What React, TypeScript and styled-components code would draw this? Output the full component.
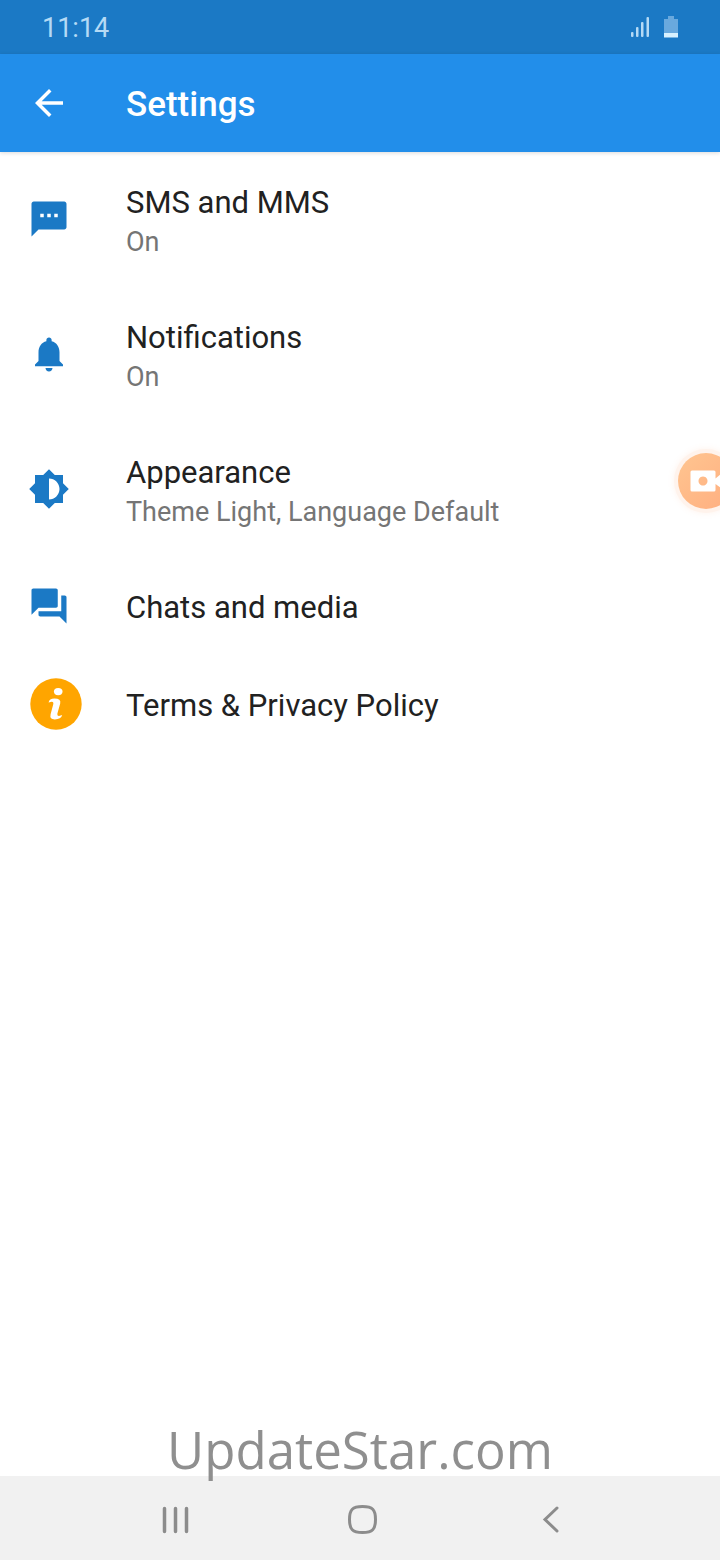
import React from "react";
import styled, { createGlobalStyle } from "styled-components";

const GlobalStyle = createGlobalStyle`
  * { box-sizing: border-box; }
  body { margin: 0; background: #fff; font-family: Roboto, "Noto Sans", sans-serif; }
  button { font: inherit; border: 0; padding: 0; background: none; cursor: pointer; }
  svg { display: block; flex: none; }
`;

const Screen = styled.div`
  position: relative;
  display: flex;
  flex-direction: column;
  min-height: 100vh;
  overflow: hidden;
`;

const StatusBar = styled.div`
  display: flex;
  align-items: center;
  justify-content: space-between;
  height: 54px;
  padding: 0 41px 0 42px;
  background: #1b79c5;
  color: #b5daf5;
`;

const Clock = styled.span`
  padding-top: 2px;
  font-size: 27px;
  line-height: 32px;
`;

const StatusIcons = styled.div`
  display: flex;
  align-items: center;
  gap: 13px;
`;

const AppBar = styled.header`
  display: flex;
  align-items: center;
  gap: 56px;
  height: 98px;
  padding: 0 28px;
  background: #228eea;
  color: #fff;
  box-shadow: 0 1px 4px rgba(0, 0, 0, 0.15);
`;

const BackButton = styled.button`
  color: inherit;
`;

const PageTitle = styled.h1`
  margin: 0;
  padding-top: 3px;
  font-size: 35px;
  line-height: 42px;
  font-weight: 500;
`;

const SettingsList = styled.main`
  flex: 1;
  display: flex;
  flex-direction: column;
`;

const SettingRow = styled.button<{ $tall?: boolean }>`
  display: flex;
  align-items: ${(p) => (p.$tall ? "flex-start" : "center")};
  width: 100%;
  min-height: ${(p) => (p.$tall ? 135 : 98)}px;
  padding: ${(p) => (p.$tall ? "31px 28px 0" : "0 28px")};
  text-align: left;
`;

const IconSlot = styled.span<{ $tall?: boolean }>`
  flex: none;
  width: 98px;
  padding-top: ${(p) => (p.$tall ? 15 : 0)}px;
`;

const RowText = styled.span<{ $tall?: boolean }>`
  display: flex;
  flex-direction: column;
  padding-top: ${(p) => (p.$tall ? 0 : 4)}px;
`;

const RowTitle = styled.span`
  color: #212121;
  font-size: 31px;
  line-height: 40px;
`;

const RowSummary = styled.span`
  color: #757575;
  font-size: 27px;
  line-height: 38px;
`;

const RecordButton = styled.button`
  position: absolute;
  top: 453px;
  right: -14px;
  display: flex;
  align-items: center;
  justify-content: center;
  width: 56px;
  height: 56px;
  border-radius: 50%;
  background: linear-gradient(135deg, #ffc590, #ffae80);
  box-shadow: 0 0 0 4px #fff3ec, 0 0 6px 4px rgba(255, 170, 120, 0.15);
`;

const Watermark = styled.div`
  position: absolute;
  right: 0;
  bottom: 74px;
  left: 0;
  color: #8f8f8f;
  font-family: "Open Sans", "Noto Sans", sans-serif;
  font-size: 51px;
  line-height: 74px;
  text-align: center;
`;

const NavBar = styled.nav`
  display: flex;
  align-items: center;
  justify-content: space-between;
  height: 84px;
  padding: 3px 150px 0 156px;
  background: #f1f1f1;
  color: #8c8c8c;
`;

const NavButton = styled.button`
  color: inherit;
`;

const GlyphIcon = ({ d, color = "#1b79c5" }: { d: string; color?: string }) => (
  <svg width="42" height="42" viewBox="0 0 24 24" fill={color} aria-hidden="true">
    <path d={d} />
  </svg>
);

const InfoIcon = () => (
  <svg width="56" height="56" viewBox="0 0 56 56" aria-hidden="true">
    <circle cx="28" cy="28" r="25.7" fill="#ffa500" />
    <ellipse cx="30.2" cy="15.600" rx="4.300" ry="3.700" fill="#fff" />
    <path
      d="M20.600 26.400Q21.200 22.600 26.400 22.600Q33.400 22.600 32.200 27.600L29.400 37.600Q28.800 40.200 31 40L34.200 39Q33 43.400 26.800 43.400Q21.400 43.400 22.600 38.200L25.200 28.400Q25.900 25.600 23.600 25.800Z"
      fill="#fff"
    />
  </svg>
);

const rows = [
  {
    title: "SMS and MMS",
    summary: "On",
    icon: <GlyphIcon d="M20.700 2H3.300C2.600 2 2 2.600 2 3.300V22l4-4h14.700c.7 0 1.300-.6 1.300-1.300V3.300c0-.7-.6-1.300-1.300-1.300zM9 11H7V9h2v2zm4 0h-2V9h2v2zm4 0h-2V9h2v2z" />,
  },
  {
    title: "Notifications",
    summary: "On",
    icon: <GlyphIcon d="M12 22c1.100 0 2-.9 2-2h-4c0 1.100.89 2 2 2zm6-6v-5c0-3.070-1.640-5.640-4.500-6.320V4c0-.83-.67-1.500-1.500-1.500s-1.500.67-1.500 1.500v.68C7.630 5.360 6 7.920 6 11v5l-2 2v1h16v-1l-2-2z" />,
  },
  {
    title: "Appearance",
    summary: "Theme Light, Language Default",
    icon: <GlyphIcon d="M20 15.310L23.310 12 20 8.690V4h-4.690L12 .69 8.690 4H4v4.690L.69 12 4 15.310V20h4.690L12 23.310 15.310 20H20v-4.690zM12 18V6c3.310 0 6 2.690 6 6s-2.690 6-6 6z" />,
  },
  {
    title: "Chats and media",
    icon: <GlyphIcon d="M21 6h-2v9H6v2c0 .55.45 1 1 1h11l4 4V7c0-.55-.45-1-1-1zm-4 6V3c0-.55-.45-1-1-1H3c-.55 0-1 .45-1 1v14l4-4h10c.55 0 1-.45 1-1z" />,
  },
  { title: "Terms & Privacy Policy", icon: <InfoIcon /> },
];

export default function App() {
  return (
    <Screen>
      <GlobalStyle />
      <StatusBar>
        <Clock>11:14</Clock>
        <StatusIcons>
          <svg width="20" height="24" viewBox="0 0 20 24" fill="#b5daf5" aria-hidden="true">
            <rect x="1" y="17" width="2.500" height="5" rx="1" />
            <rect x="6" y="12" width="2.500" height="10" rx="1" />
            <rect x="11" y="7" width="2.500" height="15" rx="1" />
            <rect x="16.500" y="2" width="2.500" height="20" rx="1" />
          </svg>
          <svg width="16" height="24" viewBox="0 0 16 24" aria-hidden="true">
            <path d="M5 1h6v3h4v14H1V4h4z" fill="#69a9de" />
            <path d="M1 18h14v4.500H1z" fill="#d8f1ff" />
          </svg>
        </StatusIcons>
      </StatusBar>
      <AppBar>
        <BackButton aria-label="Back">
          <GlyphIcon color="#fff" d="M20 11H7.830l5.590-5.590L12 4l-8 8 8 8 1.410-1.410L7.830 13H20v-2z" />
        </BackButton>
        <PageTitle>Settings</PageTitle>
      </AppBar>
      <SettingsList>
        {rows.map(({ title, summary, icon }) => (
          <SettingRow key={title} $tall={!!summary}>
            <IconSlot $tall={!!summary}>{icon}</IconSlot>
            <RowText $tall={!!summary}>
              <RowTitle>{title}</RowTitle>
              {summary && <RowSummary>{summary}</RowSummary>}
            </RowText>
          </SettingRow>
        ))}
      </SettingsList>
      <NavBar>
        <NavButton aria-label="Recent apps">
          <svg width="40" height="40" viewBox="0 0 40 40" stroke="currentColor" strokeWidth="3.500" strokeLinecap="round">
            <path d="M8.500 8.500v23M19.500 8.500v23M30.500 8.500v23" />
          </svg>
        </NavButton>
        <NavButton aria-label="Home">
          <svg width="40" height="40" viewBox="0 0 40 40" fill="none" stroke="currentColor" strokeWidth="3">
            <path d="M19.500 6.500C29.500 6.500 32.500 9.500 32.500 19.500S29.500 32.500 19.500 32.500 6.500 29.500 6.500 19.500 9.500 6.500 19.500 6.500z" />
          </svg>
        </NavButton>
        <NavButton aria-label="Back">
          <svg width="40" height="40" viewBox="0 0 40 40" fill="none" stroke="currentColor" strokeWidth="3" strokeLinecap="round">
            <path d="M27 8L15 19.500 27 31" />
          </svg>
        </NavButton>
      </NavBar>
      <RecordButton aria-label="Record screen">
        <svg width="32" height="24" viewBox="0 0 32 24" aria-hidden="true">
          <path
            fillRule="evenodd"
            fill="#fff"
            d="M2 1.500H24Q25.500 1.500 25.500 3V9.500L31 5V19L25.500 15V21Q25.500 22.500 24 22.500H2Q.5 22.500 .5 21V3Q.5 1.500 2 1.500zM13 7.500a4.500 4.500 0 1 0 .01 0z"
          />
        </svg>
      </RecordButton>
      <Watermark>UpdateStar.com</Watermark>
    </Screen>
  );
}
